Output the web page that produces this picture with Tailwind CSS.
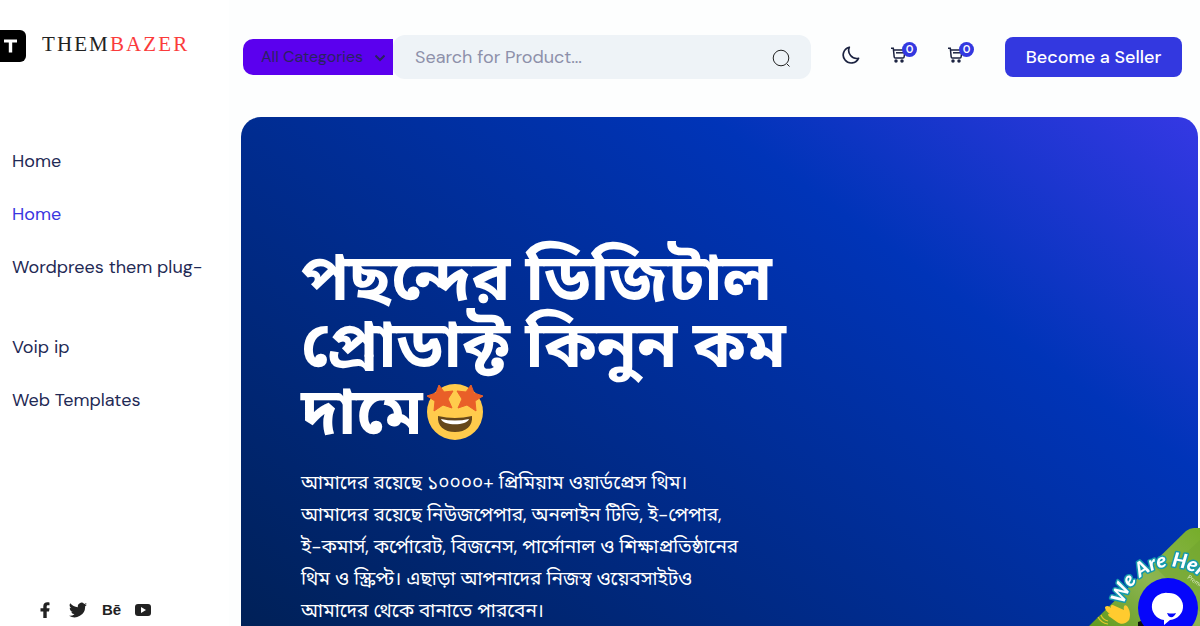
<!DOCTYPE html>
<html lang="bn">
<head>
    <meta charset="UTF-8">
    <meta name="viewport" content="width=device-width, initial-scale=1.0">
    <title>Thembazer</title>
    <script src="https://cdn.jsdelivr.net/npm/@tailwindcss/browser@4"></script>
</head>
<body class="bg-[#fdfefe] font-['DM_Sans','Noto_Sans_Bengali','Noto_Sans',sans-serif] text-[#1f2a55]">
    <div class="flex h-screen overflow-hidden">

        <!-- Sidebar -->
        <aside class="flex w-[229px] shrink-0 flex-col bg-white">
            <a href="#" class="flex h-[91px] items-center gap-4" aria-label="Thembazer">
                <svg class="h-8 w-[26px]" viewBox="0 0 26 32">
                    <rect x="-8" y="0" width="34" height="32" rx="6" fill="#000"/>
                    <path d="M4 9.500h13v3h-4.800v10H8.800v-10H4z" fill="#fff"/>
                </svg>
                <span class="pb-1 font-['Liberation_Serif',serif] text-[21px] leading-7 tracking-widest text-[#222]">THEM<span class="text-[#fb3b3b]">BAZER</span></span>
            </a>
            <nav class="mt-14 flex flex-col gap-[25px] pl-3 text-[18px] leading-7">
                <a href="#">Home</a>
                <a href="#" class="text-[#3a36e0]">Home</a>
                <a href="#" class="h-[55px] whitespace-nowrap">Wordprees them plug-</a>
                <a href="#">Voip ip</a>
                <a href="#">Web Templates</a>
            </nav>
            <div class="mt-auto flex h-8 items-center gap-[15px] pl-9 text-[#222]">
                <a href="#" aria-label="Facebook"><svg class="h-4 w-[18px]" viewBox="0 0 16 16" fill="currentColor"><path d="M6.300 16V9.500H3.500V6.300h2.800V4.200C6.300 1.500 8 .2 10.300.2c1 0 1.900.1 2.200.2V3.200h-1.600c-1.100 0-1.200.6-1.200 1.300v1.800h2.900L12 9.500H9.700V16z"/></svg></a>
                <a href="#" aria-label="Twitter"><svg class="h-[18px] w-[18px]" viewBox="0 0 24 24" fill="currentColor"><path d="M24 4.600a10 10 0 0 1-2.800.8 5 5 0 0 0 2.200-2.700c-1 .6-2 1-3.100 1.200a4.900 4.900 0 0 0-8.400 4.500C7.700 8.100 4.100 6.100 1.700 3.100a4.900 4.900 0 0 0 1.500 6.600c-.8 0-1.600-.2-2.200-.6v.1a4.900 4.900 0 0 0 4 4.800 5 5 0 0 1-2.300.1 4.900 4.900 0 0 0 4.600 3.400A9.900 9.900 0 0 1 0 19.500 14 14 0 0 0 21.500 7.100 10 10 0 0 0 24 4.600z"/></svg></a>
                <a href="#" class="w-[18px] font-['Liberation_Sans',sans-serif] text-[15px] leading-4 font-bold" aria-label="Behance">Bē</a>
                <a href="#" aria-label="YouTube"><svg class="h-4 w-4" viewBox="0 0 16 16"><rect y="2" width="16" height="12" rx="3" fill="currentColor"/><path d="M6 5v6l5-3z" fill="#fff"/></svg></a>
            </div>
        </aside>

        <main class="flex min-w-0 flex-1 flex-col pr-[2px] pl-3">
            <!-- Top bar -->
            <header class="flex h-[117px] shrink-0 items-center pb-[3px] pl-[2px]">
                <form class="flex min-w-0 flex-1 items-center">
                    <div class="relative shrink-0">
                        <label for="category" class="sr-only">Category</label>
                        <select id="category" class="h-9 w-[150px] appearance-none rounded-l-[10px] bg-[#5b00ee] pl-[18px] text-base text-[#2b2260]">
                            <option>All Categories</option>
                        </select>
                        <svg class="pointer-events-none absolute top-[14px] right-2 h-2.5 w-2.5" viewBox="0 0 10 10" fill="none" stroke="#2b2260" stroke-width="2"><path d="M.5 2.500 5 7l4.500-4.500"/></svg>
                    </div>
                    <div class="relative min-w-0 flex-1">
                        <label for="search" class="sr-only">Search</label>
                        <input id="search" type="text" placeholder="Search for Product..." class="h-11 w-full rounded-xl bg-[#eef3f7] px-[22px] text-[18px] placeholder-[#8d90aa] outline-none">
                        <button type="button" class="absolute top-[14px] right-[21px]" aria-label="Search">
                            <svg class="h-[18px] w-[18px]" viewBox="0 0 18 18" fill="none" stroke="#222"><circle cx="9" cy="9" r="7.800"/><path d="m15 15 2.500 2.500"/></svg>
                        </button>
                    </div>
                </form>
                <button type="button" class="ml-[31px] pb-1" aria-label="Dark mode">
                    <svg class="h-[18px] w-[18px]" viewBox="0 0 18 18" fill="none" stroke="#1b2240" stroke-width="1.700" stroke-linejoin="round"><path d="M7.300 1.200A8 8 0 1 0 16.500 12.300 8.200 8.200 0 0 1 7.300 1.200z"/></svg>
                </button>
                <button type="button" class="relative ml-[31px] pb-1" aria-label="Cart">
                    <svg class="h-4 w-4" viewBox="0 0 16 16" fill="none" stroke="#1b2240" stroke-width="1.500"><path d="M0 1.200h2.300l.9 8.800q.1 1 1 1H12q1 0 1.100-1L14 3H2.600"/><path d="M5 5.800h8"/><circle cx="5" cy="14" r="1" fill="#1b2240"/><circle cx="11" cy="14" r="1" fill="#1b2240"/></svg>
                    <span class="absolute -top-[5px] left-[11px] h-[15px] w-[15px] rounded-full bg-[#3338e0] text-center text-[11px] leading-[15px] font-semibold text-white">0</span>
                </button>
                <button type="button" class="relative ml-[41px] pb-1" aria-label="Wishlist">
                    <svg class="h-4 w-4" viewBox="0 0 16 16" fill="none" stroke="#1b2240" stroke-width="1.500"><path d="M0 1.200h2.300l.9 8.800q.1 1 1 1H12q1 0 1.100-1L14 3H2.600"/><path d="M5 5.800h8"/><circle cx="5" cy="14" r="1" fill="#1b2240"/><circle cx="11" cy="14" r="1" fill="#1b2240"/></svg>
                    <span class="absolute -top-[5px] left-[11px] h-[15px] w-[15px] rounded-full bg-[#3338e0] text-center text-[11px] leading-[15px] font-semibold text-white">0</span>
                </button>
                <button type="button" class="mr-4 ml-[41px] h-10 w-[177px] rounded-lg bg-[#3338e0] text-[18px] font-medium whitespace-nowrap text-white">Become a Seller</button>
            </header>

            <!-- Hero -->
            <section class="h-[574px] shrink-0 rounded-[20px] bg-[linear-gradient(36deg,#001f50_0%,#0034b8_72%,#3538e4_100%)] px-[60px] pt-[128px] text-white">
                <h1 class="text-[65px] leading-[67px] font-bold whitespace-nowrap">পছন্দের ডিজিটাল<br>প্রোডাক্ট কিনুন কম<br>দামে<svg class="ml-1 inline-block h-14 w-14 align-[-6px]" viewBox="0 0 56 56" role="img" aria-label="🤩">
                    <circle cx="28" cy="28" r="28" fill="#ffcb4c"/>
                    <path d="M11 32q17 4 34 0c1 10-6 16-17 16S10 42 11 32z" fill="#65471b"/>
                    <path d="M14 35q14 3 28 0c-2 7-26 7-28 0z" fill="#fff"/>
                    <path d="m12 1 5 7 9-1-5 8 4 9-9-3-9 6 1-10-8-5 9-3zM44 1l-5 7-9-1 5 8-4 9 9-3 9 6-1-10 8-5-9-3z" fill="#e95f28" stroke="#e95f28" stroke-linejoin="round"/>
                </svg></h1>
                <p class="mt-[21px] text-[19px] leading-8 whitespace-nowrap">আমাদের রয়েছে ১০০০০+ প্রিমিয়াম ওয়ার্ডপ্রেস থিম।<br>আমাদের রয়েছে নিউজপেপার, অনলাইন টিভি, ই-পেপার,<br>ই-কমার্স, কর্পোরেট, বিজনেস, পার্সোনাল ও শিক্ষাপ্রতিষ্ঠানের<br>থিম ও স্ক্রিপ্ট। এছাড়া আপনাদের নিজস্ব ওয়েবসাইটও<br>আমাদের থেকে বানাতে পারবেন।</p>
            </section>
        </main>
    </div>

    <!-- Chat widget -->
    <button type="button" class="fixed right-0 bottom-0" aria-label="Open chat">
        <svg class="h-[98px] w-[115px]" viewBox="0 0 115 98">
            <defs>
                <linearGradient id="leaf" x1="0" y1="1" x2="1" y2="0"><stop offset="0" stop-color="#5f9a1c"/><stop offset=".5" stop-color="#8db552"/><stop offset="1" stop-color="#76ad2a"/></linearGradient>
                <path id="arc" d="M39 77A48 48 0 0 1 133 77"/>
            </defs>
            <path d="M4 98 101 3Q105 0 109 0H115V98z" fill="url(#leaf)"/>
            <path d="m68 37 47 47V12L92 33z" fill="#6fa32d" opacity=".5"/>
            <text class="font-['Lato',sans-serif] text-[20px] font-black italic" fill="#fff" stroke="#159aad" stroke-width="3" stroke-linejoin="round" paint-order="stroke"><textPath href="#arc">We Are Here!</textPath></text>
            <text class="font-['Lato',sans-serif] text-[6px]" fill="#dcebc4" transform="translate(102 50) rotate(35)">Premium</text>
            <path d="M53 98v-4l6-2 5 6z" fill="#101010"/>
            <path d="M20 79c2-2 4-1 6 1-1-3 1-4 4-2l9 4c-1-4 1-6 3-4 3 4 4 9 2 14-3 4-8 5-12 2l-7-5c-3-2-2-4 0-3-4-3-5-5-5-7z" fill="#ffcb2f"/>
            <path d="M13 89q3 6 10 7M16 87q2 5 7 6" fill="none" stroke="#e4c52c" stroke-width="1.200"/>
            <circle cx="83" cy="80" r="30" fill="#0606fb"/>
            <path d="M83 65a14 13.500 0 0 1 2 27l-6 5v-5a14 13.500 0 0 1 4-27z" fill="#fff"/>
            <path d="M82 85q5 1 9 0-2 5-6 4-2-1-3-4z" fill="#0606fb"/>
        </svg>
    </button>
</body>
</html>
